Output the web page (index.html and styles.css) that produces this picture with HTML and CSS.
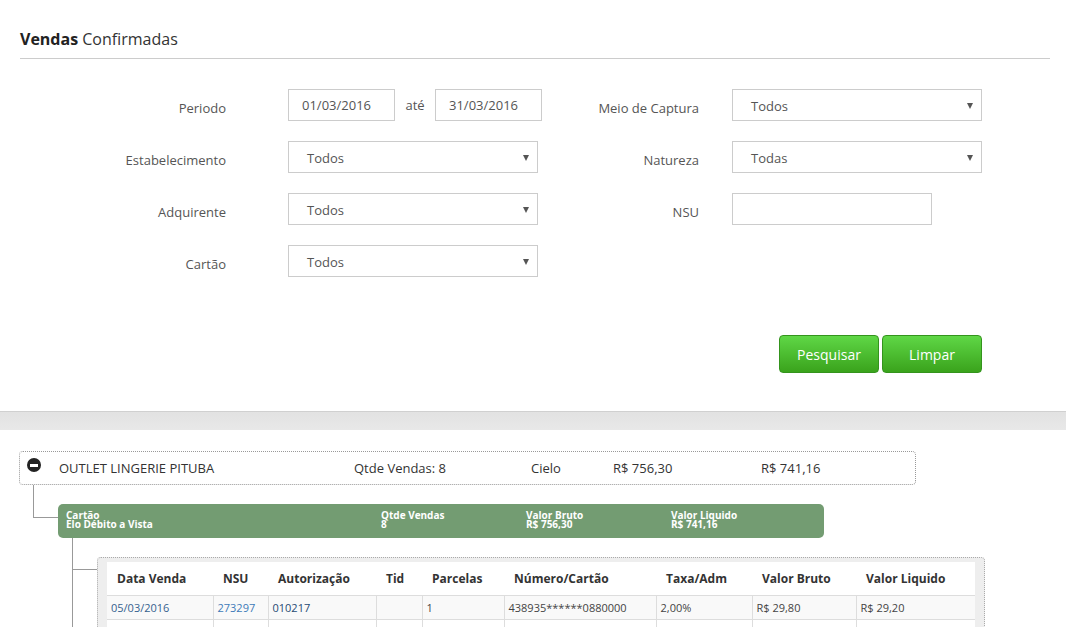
FILE: index.html
```html
<!DOCTYPE html>
<html lang="pt">
<head>
<meta charset="utf-8">
<title>Vendas Confirmadas</title>
<link rel="stylesheet" href="styles.css">
</head>
<body>
<div class="panel">
  <div class="title"><b>Vendas</b> Confirmadas</div>
  <div class="form">
    <div class="lbl">Periodo</div>
    <div class="dates">
      <div class="inp date">01/03/2016</div>
      <span class="ate">até</span>
      <div class="inp date">31/03/2016</div>
    </div>
    <div class="lbl lbl-r">Meio de Captura</div>
    <div class="sel"><span>Todos</span><i class="caret"></i></div>

    <div class="lbl">Estabelecimento</div>
    <div class="sel"><span>Todos</span><i class="caret"></i></div>
    <div class="lbl lbl-r">Natureza</div>
    <div class="sel"><span>Todas</span><i class="caret"></i></div>

    <div class="lbl">Adquirente</div>
    <div class="sel"><span>Todos</span><i class="caret"></i></div>
    <div class="lbl lbl-r">NSU</div>
    <div class="inp nsu"></div>

    <div class="lbl">Cartão</div>
    <div class="sel"><span>Todos</span><i class="caret"></i></div>
  </div>
  <div class="actions">
    <button class="btn">Pesquisar</button>
    <button class="btn">Limpar</button>
  </div>
</div>
<div class="band"></div>
<div class="results">
  <div class="store">
    <span class="minus"></span>
    <span class="c-name">OUTLET LINGERIE PITUBA</span>
    <span class="c-qtde">Qtde Vendas: 8</span>
    <span class="c-acq">Cielo</span>
    <span class="c-bruto">R$ 756,30</span>
    <span class="c-liq">R$ 741,16</span>
  </div>
  <div class="tree1">
    <div class="tick1"></div>
    <div class="group">
      <div class="g-col g1">Cartão<br>Elo Débito a Vista</div>
      <div class="g-col g2">Qtde Vendas<br>8</div>
      <div class="g-col g3">Valor Bruto<br>R$ 756,30</div>
      <div class="g-col g4">Valor Liquido<br>R$ 741,16</div>
    </div>
  </div>
  <div class="tree2">
    <div class="tick2"></div>
    <div class="tablebox">
      <table class="grid">
        <colgroup>
          <col style="width:106px"><col style="width:55px"><col style="width:108px"><col style="width:46px"><col style="width:82px"><col style="width:152px"><col style="width:96px"><col style="width:104px"><col style="width:119px">
        </colgroup>
        <thead>
          <tr>
            <th>Data Venda</th><th>NSU</th><th>Autorização</th><th>Tid</th><th>Parcelas</th><th>Número/Cartão</th><th>Taxa/Adm</th><th>Valor Bruto</th><th>Valor Liquido</th>
          </tr>
        </thead>
        <tbody>
          <tr class="odd">
            <td class="t-date">05/03/2016</td><td class="t-nsu">273297</td><td class="t-auth">010217</td><td class="t-plain"></td><td class="t-plain">1</td><td class="t-plain">438935******0880000</td><td class="t-plain">2,00%</td><td class="t-plain">R$ 29,80</td><td class="t-plain">R$ 29,20</td>
          </tr>
          <tr>
            <td></td><td></td><td></td><td></td><td></td><td></td><td></td><td></td><td></td>
          </tr>
        </tbody>
      </table>
    </div>
  </div>
</div>
</body>
</html>
```
FILE: styles.css
```css
* { box-sizing: border-box; }
body {
  margin: 0;
  font-family: "Open Sans", "Liberation Sans", sans-serif;
  background: #fff;
  color: #333;
}
.panel {
  padding: 29px 16px 38px 20px;
  background: #fff;
}
.title {
  font-size: 16px;
  line-height: 20px;
  color: #333;
  padding-bottom: 9px;
  border-bottom: 1px solid #cccccc;
}
.title b { color: #222; font-weight: 700; }
.form {
  margin-top: 30px;
  display: grid;
  grid-template-columns: 268px 250px 194px 250px;
  grid-auto-rows: 32px;
  row-gap: 20px;
}
.lbl {
  font-size: 13px;
  line-height: 32px;
  padding-top: 3px;
  color: #555;
  text-align: right;
  padding-right: 62px;
  white-space: nowrap;
}
.lbl-r { padding-right: 33px; }
.inp, .sel {
  height: 32px;
  border: 1px solid #cccccc;
  background: #fff;
  font-size: 13px;
  line-height: 30px;
  color: #555;
}
.dates { display: flex; align-items: center; }
.date { width: 107px; flex-shrink: 0; padding-left: 13px; }
.ate { flex-shrink: 0; font-size: 13px; color: #555; width: 40px; text-align: center; line-height: 30px; }
.nsu { width: 200px; }
.sel {
  display: flex;
  justify-content: space-between;
  align-items: center;
  padding: 1px 8px 0 18px;
}
.caret {
  width: 0; height: 0;
  border-left: 3px solid transparent;
  border-right: 3px solid transparent;
  border-top: 6px solid #555;
}
.actions {
  margin-top: 58px;
  padding-right: 68px;
  display: flex;
  justify-content: flex-end;
  gap: 3px;
}
.btn {
  width: 100px;
  height: 38px;
  border: 1px solid #34941d;
  border-radius: 4px;
  background: linear-gradient(#5fd746, #3aa31c);
  color: #fff;
  font-family: "Open Sans", "Liberation Sans", sans-serif;
  font-size: 14px;
  padding: 0;
}
.band {
  height: 19px;
  border-top: 1px solid #d0d0d0;
  background: linear-gradient(#e2e2e2, #e8e8e8);
}
.results { padding-top: 21px; }
.store {
  margin-left: 19px;
  width: 897px;
  height: 34px;
  border: 1px dotted #999;
  border-radius: 4px;
  display: flex;
  align-items: center;
  padding-left: 7px;
  font-size: 13px;
  color: #333;
}
.minus {
  align-self: flex-start;
  margin-top: 6px;
  width: 14px; height: 14px;
  border-radius: 50%;
  background: #222;
  display: flex;
  align-items: center;
  justify-content: center;
  margin-right: 18px;
}
.minus::before {
  content: "";
  width: 8px; height: 3px;
  background: #fff;
}
.store span { white-space: nowrap; }
.c-name { width: 295px; }
.c-qtde { width: 177px; }
.c-acq { width: 82px; }
.c-bruto { width: 148px; }
.tree1 {
  margin-left: 33px;
  display: flex;
  align-items: flex-start;
}
.tick1 {
  width: 25px;
  height: 33px;
  border-left: 1px solid #999;
  border-bottom: 1px solid #999;
}
.group {
  margin-top: 19px;
  width: 766px;
  height: 34px;
  border-radius: 5px;
  background: #739c72;
  display: flex;
  padding: 7px 0 0 8px;
  color: #fff;
  font-weight: 700;
  font-size: 10px;
  line-height: 9px;
}
.g1 { width: 315px; }
.g2 { width: 145px; }
.g3 { width: 145px; }
.tree2 {
  margin-left: 72px;
  border-left: 1px solid #999;
  display: flex;
  align-items: flex-start;
  padding-bottom: 40px;
}
.tick2 {
  width: 24px;
  height: 32px;
  border-bottom: 1px solid #999;
}
.tablebox {
  margin-top: 19px;
  width: 888px;
  border: 1px dotted #aaa;
  border-radius: 4px;
  background: #eeeeee;
  padding: 4px 9px 0 9px;
}
.grid {
  width: 868px;
  table-layout: fixed;
  border-collapse: collapse;
  background: #fff;
}
.grid th {
  height: 33px;
  padding: 0 0 0 10px;
  text-align: left;
  font-size: 12px;
  font-weight: 700;
  color: #333;
  border-bottom: 1px solid #dddddd;
  white-space: nowrap;
}
.grid td {
  height: 24px;
  padding: 0 0 0 4px;
  font-size: 11px;
  color: #444;
  border-bottom: 1px solid #dddddd;
  border-left: 1px solid #dddddd;
  white-space: nowrap;
}
.grid td:first-child { border-left: none; }
.grid tr.odd td { background: #f9f9f9; }
.grid td.t-plain { color: #444444; }
.grid td.t-date { color: #35628f; }
.grid td.t-nsu { color: #3d79b8; }
.grid td.t-auth { color: #264a73; }
```
